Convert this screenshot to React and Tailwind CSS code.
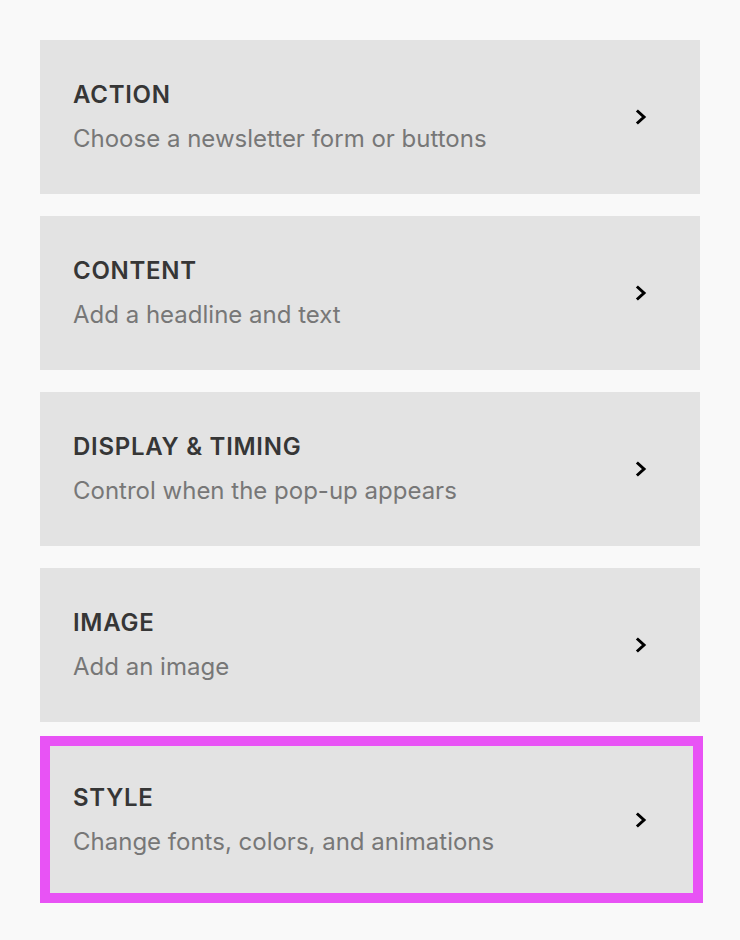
import React from 'react';

const SECTIONS = [
  { title: 'ACTION', desc: 'Choose a newsletter form or buttons' },
  { title: 'CONTENT', desc: 'Add a headline and text' },
  { title: 'DISPLAY & TIMING', desc: 'Control when the pop-up appears' },
  { title: 'IMAGE', desc: 'Add an image' },
];

function Chevron() {
  return (
    <svg width="14" height="16" viewBox="0 0 14 16" className="shrink-0">
      <path d="M4 2.5 L10 8 L4 13.5" fill="none" stroke="#000" strokeWidth="3" strokeLinecap="square" />
    </svg>
  );
}

function Row({ title, desc }) {
  return (
    <div className="flex items-center justify-between">
      <div>
        <h3 className="text-[24px] font-semibold tracking-[0.03em] text-[#363636] leading-none">{title}</h3>
        <p className="mt-[20px] text-[24px] text-[#777] leading-none">{desc}</p>
      </div>
      <Chevron />
    </div>
  );
}

export default function App() {
  return (
    <div className="min-h-[940px] bg-[#f9f9f9] pt-10 px-10" style={{ fontFamily: 'Inter, "Noto Sans", sans-serif' }}>
      <div className="w-[660px] flex flex-col gap-[22px]">
        {SECTIONS.map((s) => (
          <div key={s.title} className="h-[154px] bg-[#e3e3e3] pl-[33px] pr-[52px] flex flex-col justify-center">
            <Row {...s} />
          </div>
        ))}
      </div>
      <div className="mt-[14px] w-[663px] h-[167px] border-[10px] border-[#e853f5] bg-[#e3e3e3] pl-[23px] pr-[45px] flex flex-col justify-center">
        <Row title="STYLE" desc="Change fonts, colors, and animations" />
      </div>
    </div>
  );
}
